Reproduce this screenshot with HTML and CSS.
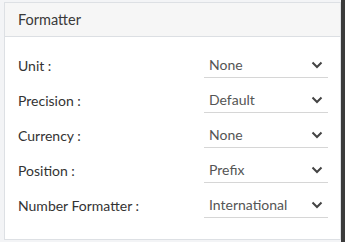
FILE: index.html
```html
<!DOCTYPE html>
<html lang="en">
<head>
    <meta charset="UTF-8">
    <title>Formatter</title>
    <link rel="stylesheet" href="styles.css">
</head>
<body>
    <div class="page">
        <div class="panel">
            <div class="panel-header">Formatter</div>
            <div class="panel-body">
                <div class="field">
                    <label>Unit :</label>
                    <div class="select"><span>None</span><svg class="chev" viewBox="0 0 12 8"><path d="M1.5 1.5 6 6 10.5 1.5"/></svg></div>
                </div>
                <div class="field">
                    <label>Precision :</label>
                    <div class="select"><span>Default</span><svg class="chev" viewBox="0 0 12 8"><path d="M1.5 1.5 6 6 10.5 1.5"/></svg></div>
                </div>
                <div class="field">
                    <label>Currency :</label>
                    <div class="select"><span>None</span><svg class="chev" viewBox="0 0 12 8"><path d="M1.5 1.5 6 6 10.5 1.5"/></svg></div>
                </div>
                <div class="field">
                    <label>Position :</label>
                    <div class="select"><span>Prefix</span><svg class="chev" viewBox="0 0 12 8"><path d="M1.5 1.5 6 6 10.5 1.5"/></svg></div>
                </div>
                <div class="field">
                    <label>Number Formatter :</label>
                    <div class="select"><span>International</span><svg class="chev" viewBox="0 0 12 8"><path d="M1.5 1.5 6 6 10.5 1.5"/></svg></div>
                </div>
            </div>
        </div>
        <div class="edge"></div>
    </div>
</body>
</html>
```

FILE: styles.css
```css
body {
    margin: 0;
    font-family: Lato, "Open Sans", sans-serif;
    background: #f3f4f6;
}
.page {
    display: flex;
    height: 242px;
}
.panel {
    flex: 1;
    margin: 2px 0 0 4px;
    height: 236px;
    background: white;
    border: 1px solid #dde0e4;
}
.panel-header {
    height: 33px;
    line-height: 33px;
    padding-left: 13px;
    font-size: 14.5px;
    color: #3a3a3a;
    background: #f6f6f6;
    border-bottom: 1px solid #dcdfe3;
}
.panel-body {
    padding: 15px 0 0 13px;
    display: flex;
    flex-direction: column;
    gap: 9px;
}
.field {
    display: grid;
    grid-template-columns: 186px 124px;
    align-items: center;
    height: 26px;
    font-size: 14px;
    color: #333;
}
.select {
    display: flex;
    justify-content: space-between;
    align-items: center;
    height: 25px;
    padding: 0 5px;
    border-bottom: 1px solid #d6d6d6;
    color: #555;
}
.chev {
    width: 12px;
    height: 8px;
    fill: none;
    stroke: #444;
    stroke-width: 2;
}
.edge {
    width: 4px;
    background: #3b3b3b;
}
```
